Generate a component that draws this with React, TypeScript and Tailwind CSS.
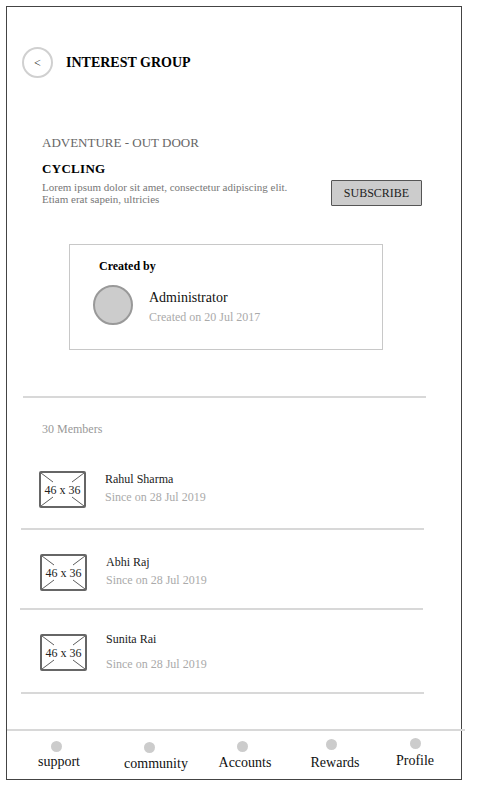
import React from "react";

const members = [
  { name: "Rahul Sharma", since: "Since on 28 Jul 2019", img: "mt-[35px] ml-[32px]", text: "ml-[19px] mt-[1px]", gap: "gap-[4px]", line: "mt-[20px] ml-[14px] w-[403px]" },
  { name: "Abhi Raj", since: "Since on 28 Jul 2019", img: "mt-[24px] ml-[33px]", text: "ml-[19px] mt-[1px]", gap: "gap-[4px]", line: "mt-[17px] ml-[13px] w-[403px]" },
  { name: "Sunita Rai", since: "Since on 28 Jul 2019", img: "mt-[24px] ml-[33px]", text: "ml-[19px] -mt-[2px]", gap: "gap-[11px]", line: "mt-[21px] ml-[14px] w-[403px]" },
];

const navItems = [
  { label: "support", w: "w-[104px]", dot: "mr-[6px] mt-[10px]", text: "mt-[2px]" },
  { label: "community", w: "w-[90px]", dot: "mr-[14px] mt-[11px]", text: "mt-[3px]" },
  { label: "Accounts", w: "w-[88px]", dot: "mr-[6px] mt-[10px]", text: "mt-[3px]" },
  { label: "Rewards", w: "w-[92px]", dot: "mr-[8px] mt-[8px]", text: "mt-[5px]" },
  { label: "Profile", w: "w-[68px]", dot: "mt-[7px]", text: "mt-[4px]" },
];

function Placeholder() {
  return (
    <div className="relative w-[47px] h-[37px] border-2 border-[#666] rounded-[2px] flex items-center justify-center">
      <svg className="absolute inset-0" width="43" height="33" viewBox="0 0 43 33">
        <g stroke="#333" strokeWidth="0.8">
          <line x1="0" y1="0" x2="12" y2="9" />
          <line x1="43" y1="0" x2="31" y2="9" />
          <line x1="0" y1="33" x2="12" y2="24" />
          <line x1="43" y1="33" x2="31" y2="24" />
        </g>
      </svg>
      <span className="relative text-[12px] leading-[14px] text-[#222]">46 x 36</span>
    </div>
  );
}

export default function App() {
  return (
    <div
      className="w-[482px] h-[790px] bg-white pt-[6px] pl-[6px]"
      style={{ fontFamily: '"Liberation Serif", "Times New Roman", serif' }}
    >
      <div className="w-[456px] h-[774px] border border-[#444] flex flex-col">
        {/* Header */}
        <div className="flex items-center mt-[40px] ml-[15px]">
          <div className="w-[31px] h-[31px] rounded-full border-2 border-[#d0d0d0] flex items-center justify-center text-[12px] text-[#222]">
            &lt;
          </div>
          <h1 className="ml-[13px] text-[14px] font-bold text-black leading-[17px]">INTEREST GROUP</h1>
        </div>

        {/* Group info */}
        <div className="ml-[35px] mt-[57px]">
          <p className="text-[13px] leading-[16px] text-[#666]">ADVENTURE - OUT DOOR</p>
          <p className="mt-[10px] text-[13px] leading-[16px] font-bold text-black tracking-[0.3px]">CYCLING</p>
          <div className="mt-[3px] w-[380px] flex items-center justify-between">
            <p className="text-[11px] leading-[12px] text-[#777]">
              Lorem ipsum dolor sit amet, consectetur adipiscing elit.
              <br />
              Etiam erat sapein, ultricies
            </p>
            <button className="w-[91px] h-[26px] bg-[#cccccc] border border-[#555] rounded-[1px] text-[12px] text-[#222]">
              SUBSCRIBE
            </button>
          </div>
        </div>

        {/* Created by card */}
        <div className="ml-[62px] mt-[38px] w-[314px] h-[106px] border border-[#c8c8c8] pl-[23px] pt-[14px]">
          <p className="ml-[6px] text-[12px] leading-[14px] font-bold text-black">Created by</p>
          <div className="mt-[12px] flex items-center">
            <div className="w-[40px] h-[40px] rounded-full bg-[#cccccc] border-2 border-[#999]" />
            <div className="ml-[16px] mt-[3px] flex flex-col gap-[4px]">
              <span className="text-[14px] leading-[17px] text-[#111]">Administrator</span>
              <span className="text-[12px] leading-[14px] text-[#aaa]">Created on 20 Jul 2017</span>
            </div>
          </div>
        </div>

        <div className="mt-[46px] ml-[16px] w-[403px] h-[2px] bg-[#d8d8d8]" />

        <p className="mt-[24px] ml-[35px] text-[12px] leading-[14px] text-[#999]">30 Members</p>

        {members.map((m) => (
          <React.Fragment key={m.name}>
            <div className={`flex items-start ${m.img}`}>
              <Placeholder />
              <div className={`${m.text} flex flex-col ${m.gap}`}>
                <span className="text-[12px] leading-[14px] text-[#222]">{m.name}</span>
                <span className="text-[12px] leading-[14px] text-[#aaa]">{m.since}</span>
              </div>
            </div>
            <div className={`${m.line} h-[2px] bg-[#d8d8d8]`} />
          </React.Fragment>
        ))}

        <div className="flex-1" />

        {/* Bottom nav */}
        <div className="w-[458px] h-[2px] bg-[#d8d8d8]" />
        <div className="flex h-[48px]">
          {navItems.map((n) => (
            <div key={n.label} className={`${n.w} flex flex-col items-center`}>
              <div className={`w-[11px] h-[11px] rounded-full bg-[#cccccc] ${n.dot}`} />
              <span className={`text-[14px] leading-[16px] text-[#111] ${n.text}`}>{n.label}</span>
            </div>
          ))}
        </div>
      </div>
    </div>
  );
}
